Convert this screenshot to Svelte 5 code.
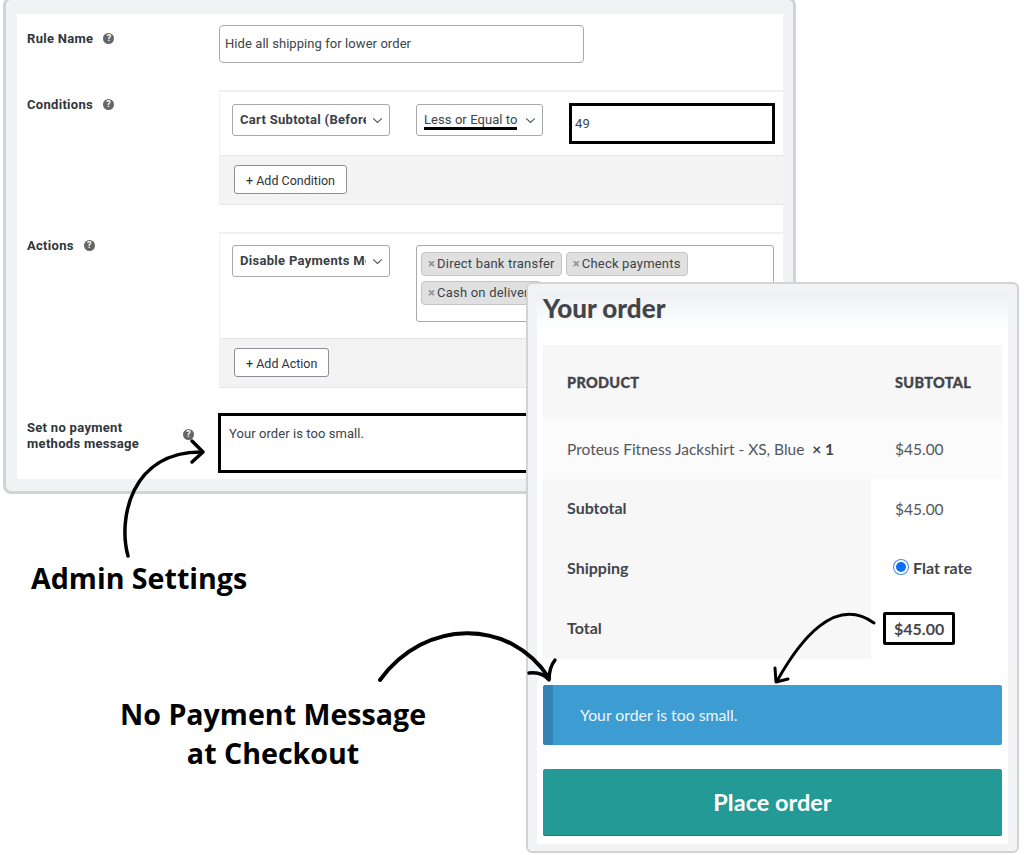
<script>
  // Two overlapping screenshots (admin rule form, checkout order) plus hand-drawn callouts.
  const tags = ['Direct bank transfer', 'Check payments', 'Cash on delivery'];
  const totals = [
    { label: 'Subtotal', value: '$45.00' },
    { label: 'Shipping', value: 'Flat rate', radio: true },
    { label: 'Total', value: '$45.00', boxed: true },
  ];
</script>

{#snippet help()}
  <span class="help">?</span>
{/snippet}

{#snippet chevron()}
  <svg class="chevron" viewBox="0 0 12 8" width="11" height="7" aria-hidden="true">
    <path d="M1 1.5 L6 6.2 L11 1.5" fill="none" stroke="#50575e" stroke-width="1.3" />
  </svg>
{/snippet}

<div class="page">
  <section class="admin">
    <div class="sheet">
      <div class="row rule-row">
        <div class="label">Rule Name {@render help()}</div>
        <div class="text-input">Hide all shipping for lower order</div>
      </div>

      <div class="row cond-row">
        <div class="label">Conditions {@render help()}</div>
        <div class="group">
          <div class="group-body cond-body">
            <div class="select strong w-158"><span>Cart Subtotal (Before shipping)</span>{@render chevron()}</div>
            <div class="select w-126 marked"><span>Less or Equal to</span>{@render chevron()}</div>
            <div class="value-box">49</div>
          </div>
          <div class="group-foot"><button class="btn">+ Add Condition</button></div>
        </div>
      </div>

      <div class="row action-row">
        <div class="label">Actions {@render help()}</div>
        <div class="group">
          <div class="group-body action-body">
            <div class="select strong w-158"><span>Disable Payments Methods</span>{@render chevron()}</div>
            <div class="multi">
              {#each tags as tag}
                <span class="tag"><i>×</i>{tag}</span>
              {/each}
            </div>
          </div>
          <div class="group-foot"><button class="btn">+ Add Action</button></div>
        </div>
      </div>

      <div class="row msg-row">
        <div class="label msg-label">
          <span>Set no payment<br />methods message</span>
          {@render help()}
        </div>
        <div class="msg-box">Your order is too small.</div>
      </div>
    </div>
  </section>

  <section class="order">
    <div class="order-sheet">
      <h2>Your order</h2>
      <div class="table">
        <div class="t-head">
          <span>PRODUCT</span>
          <span class="right-col">SUBTOTAL</span>
        </div>
        <div class="t-item">
          <span>Proteus Fitness Jackshirt - XS, Blue <b>&nbsp;× 1</b></span>
          <span class="right-col">$45.00</span>
        </div>
        {#each totals as t}
          <div class="t-row">
            <div class="t-label">{t.label}</div>
            <div class="t-value">
              {#if t.radio}
                <span class="radio"></span><b>{t.value}</b>
              {:else if t.boxed}
                <b class="boxed">{t.value}</b>
              {:else}
                {t.value}
              {/if}
            </div>
          </div>
        {/each}
      </div>
      <div class="notice">Your order is too small.</div>
      <button class="place">Place order</button>
    </div>
  </section>

  <svg class="arrows" viewBox="0 0 1024 855" width="1024" height="855" aria-hidden="true">
    <g fill="none" stroke="#000" stroke-linecap="round" stroke-linejoin="round">
      <path d="M128 556 C118 520 130 452 201 452" stroke-width="3.5" />
      <path d="M192 441 L203 452 L192 462" stroke-width="3.5" />
      <path d="M380 680 C425 618 510 618 549 678" stroke-width="4" />
      <path d="M529 673 C538 672 545 675 549 680 C549 672 551 665 555 660" stroke-width="3.5" />
      <path d="M874 623 C835 595 800 640 777 681" stroke-width="3" />
      <path d="M775 668 L776 682 L788 679" stroke-width="3" />
    </g>
  </svg>

  <div class="callout admin-call">Admin Settings</div>
  <div class="callout pay-call">No Payment Message<br />at Checkout</div>
</div>

<style>
  :global(body) {
    margin: 0;
    background: #fff;
  }

  .page {
    position: relative;
    width: 1024px;
    height: 855px;
    overflow: hidden;
    background: #fff;
    font-family: Roboto, "Liberation Sans", sans-serif;
  }

  /* admin window */
  .admin {
    position: absolute;
    left: 3px;
    top: -3px;
    width: 793px;
    height: 497px;
    box-sizing: border-box;
    border: 3px solid #d3d3d1;
    border-radius: 8px;
    background: #f1f2f4;
    padding: 14px 10px 12px 11px;
  }

  .sheet {
    background: #fff;
    height: 100%;
    box-sizing: border-box;
    color: #1d2327;
    font-size: 13px;
    letter-spacing: 0.07px;
    display: flex;
    flex-direction: column;
  }

  .row {
    display: grid;
    grid-template-columns: 202px 1fr;
  }

  .label {
    padding-left: 10px;
    font-weight: 700;
    font-size: 13px;
    letter-spacing: 0.3px;
    color: #30363b;
    display: flex;
    align-items: center;
    gap: 10px;
    align-self: start;
    height: 18px;
  }

  .help {
    width: 11px;
    height: 11px;
    border-radius: 50%;
    background: #666;
    color: #fff;
    font-size: 9px;
    line-height: 11px;
    font-weight: 700;
    letter-spacing: 0;
    text-align: center;
    flex: none;
  }

  .rule-row {
    padding-top: 15px;
    height: 76px;
    box-sizing: border-box;
  }

  .text-input {
    width: 365px;
    height: 38px;
    box-sizing: border-box;
    border: 1px solid #a7aaad;
    border-radius: 4px;
    padding: 0 5px;
    line-height: 36px;
    color: #3c434a;
    margin-top: -4px;
  }

  .cond-row {
    height: 142px;
  }

  .cond-row .label {
    margin-top: 5px;
  }

  .action-row {
    height: 155px;
  }

  .action-row .label {
    margin-top: 4px;
  }

  .group {
    border-top: 2px solid #f0f0f1;
    border-left: 1px solid #f0f0f1;
    box-sizing: border-box;
  }

  .cond-row .group {
    height: 115px;
  }

  .action-row .group {
    height: 155px;
  }

  .group-body {
    display: flex;
    align-items: flex-start;
    padding-left: 12px;
    box-sizing: border-box;
    border-bottom: 1px solid #e6e6e6;
  }

  .cond-body {
    height: 64px;
    padding-top: 12px;
  }

  .action-body {
    height: 105px;
    padding-top: 11px;
  }

  .group-foot {
    background: #f3f3f3;
    border-bottom: 1px solid #e6e6e6;
    padding: 9px 0 0 14px;
    height: 49px;
    box-sizing: border-box;
  }

  .select {
    height: 32px;
    box-sizing: border-box;
    border: 1px solid #a7aaad;
    border-radius: 3px;
    padding: 0 26px 0 7px;
    line-height: 29px;
    position: relative;
    color: #3c434a;
    flex: none;
  }

  .select span {
    display: block;
    overflow: hidden;
    white-space: nowrap;
  }

  .strong {
    font-weight: 700;
    letter-spacing: 0.3px;
    color: #3a4046;
    padding-right: 23px;
  }

  .chevron {
    position: absolute;
    right: 6px;
    top: 12px;
  }

  .w-158 {
    width: 158px;
  }

  .w-126 {
    width: 127px;
    margin-left: 26px;
  }

  .marked span {
    width: 93px;
    position: relative;
    overflow: visible;
  }

  .marked span::after {
    content: '';
    position: absolute;
    left: 0;
    right: 0;
    top: 22px;
    height: 3px;
    background: #000;
  }

  .value-box {
    width: 206px;
    height: 41px;
    box-sizing: border-box;
    border: 3px solid #000;
    margin: -1px 0 0 26px;
    padding: 4px 3px 0;
    line-height: 28px;
    color: #3c434a;
    flex: none;
  }

  .btn {
    display: block;
    background: #fff;
    border: 1px solid #8c8f94;
    border-radius: 3px;
    height: 29px;
    padding: 1px 11px 0;
    font: 12.5px Roboto, "Liberation Sans", sans-serif;
    color: #2c3338;
  }

  .multi {
    width: 358px;
    height: 77px;
    box-sizing: border-box;
    border: 1px solid #a7aaad;
    border-radius: 3px;
    margin-left: 26px;
    padding: 6px 4px;
    display: flex;
    flex-wrap: wrap;
    align-content: flex-start;
    gap: 5px 4px;
    flex: none;
    letter-spacing: 0.2px;
  }

  .tag {
    height: 24px;
    box-sizing: border-box;
    background: #e0e0e0;
    border: 1px solid #c3c4c7;
    border-radius: 4px;
    padding: 0 6px 0 6px;
    line-height: 22px;
    color: #3c434a;
    white-space: nowrap;
  }

  .tag i {
    font-style: normal;
    font-weight: 700;
    color: #8c8f94;
    margin-right: 2px;
  }

  .msg-row {
    height: 60px;
    margin-top: 26px;
  }

  .msg-label {
    height: auto;
    line-height: 16px;
    margin-top: 7px;
    position: relative;
  }

  .msg-label .help {
    position: absolute;
    left: 166px;
    top: 9px;
  }

  .msg-box {
    width: 400px;
    height: 60px;
    box-sizing: border-box;
    border: 3px solid #000;
    margin-left: -1px;
    padding: 9px 8px;
    line-height: 18px;
    color: #3c434a;
  }

  /* checkout window */
  .order {
    position: absolute;
    left: 526px;
    top: 282px;
    width: 493px;
    height: 571px;
    box-sizing: border-box;
    border: 2px solid #d3d3d1;
    border-radius: 6px;
    background: #f2f3f5;
    padding: 8px 9px 7px 9px;
    color: #43454b;
    font-family: Lato, sans-serif;
  }

  .order-sheet {
    height: 100%;
    background: linear-gradient(#edf0f3, #fbfcfc 30px, #fff 44px);
    padding: 0 6px;
    box-sizing: border-box;
    display: flex;
    flex-direction: column;
  }

  h2 {
    margin: 0;
    height: 53px;
    font-size: 26px;
    line-height: 32px;
    font-weight: 900;
    color: #43454b;
  }

  .table {
    font-size: 15px;
  }

  .t-head,
  .t-item {
    display: grid;
    grid-template-columns: 304px 1fr;
    align-items: center;
    padding-left: 24px;
  }

  .t-head {
    height: 74px;
    background: #f7f7f7;
    font-weight: 900;
    font-size: 14.5px;
    letter-spacing: 0.3px;
    -webkit-text-stroke: 0.3px #43454b;
  }

  .t-item {
    height: 60px;
    background: #fbfbfb;
    font-size: 15.5px;
    color: #54565c;
  }

  .t-item b {
    color: #43454b;
  }

  .right-col {
    padding-left: 24px;
  }

  .t-row {
    display: grid;
    grid-template-columns: 328px 1fr;
    height: 60px;
  }

  .t-label {
    background: #f7f7f7;
    display: flex;
    align-items: center;
    padding-left: 24px;
    padding-bottom: 3px;
    box-sizing: border-box;
    font-weight: 700;
    font-size: 16px;
  }

  .t-value {
    display: flex;
    align-items: center;
    padding-left: 24px;
    font-size: 15.5px;
    color: #54565c;
  }

  .t-value b {
    color: #43454b;
    font-size: 16px;
    margin-bottom: 3px;
  }

  .radio {
    width: 14px;
    height: 14px;
    box-sizing: border-box;
    border-radius: 50%;
    background: #0b6ff5;
    border: 2px solid #fff;
    box-shadow: 0 0 0 1px #3d8cf5;
    margin: 0 5px 5px -1px;
    flex: none;
  }

  .t-value .boxed {
    border: 3px solid #000;
    border-radius: 2px;
    padding: 4px 8px;
    margin: 0 0 2px -12px;
  }

  .notice {
    margin-top: 26px;
    height: 60px;
    box-sizing: border-box;
    background: #3d9cd2;
    border-left: 10px solid #3384b3;
    border-radius: 2px;
    padding-left: 27px;
    line-height: 60px;
    font-size: 15.8px;
    color: #eef6fb;
  }

  .place {
    margin-top: 24px;
    height: 67px;
    border: 0;
    border-bottom: 1px solid #18807c;
    border-radius: 2px;
    background: #239a96;
    color: #fff;
    font: 700 23.5px Lato, sans-serif;
  }

  /* callouts */
  .arrows {
    position: absolute;
    left: 0;
    top: 0;
  }

  .callout {
    position: absolute;
    font-family: "Open Sans", sans-serif;
    font-weight: 700;
    color: #000;
    font-size: 28.6px;
    line-height: 39px;
    white-space: nowrap;
  }

  .admin-call {
    left: 31px;
    top: 558px;
  }

  .pay-call {
    left: 120px;
    top: 694px;
    text-align: center;
  }
</style>
